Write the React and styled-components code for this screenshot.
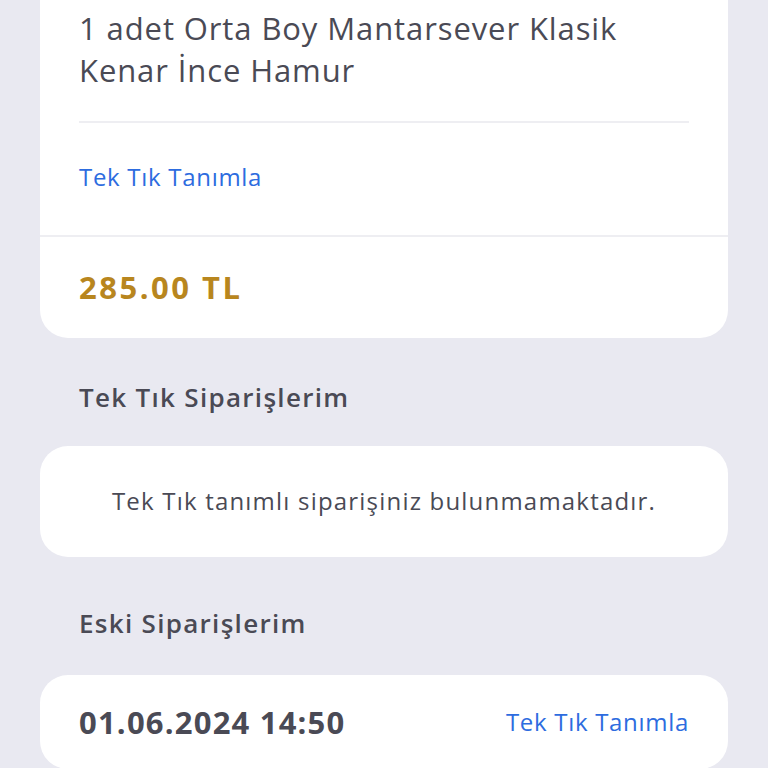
import styled, { createGlobalStyle } from 'styled-components';

const Global = createGlobalStyle`
  html, body {
    margin: 0;
    padding: 0;
    background: #e9e9f1;
    font-family: "Open Sans", "Noto Sans", sans-serif;
    color: #4a4a55;
  }
`;

const Page = styled.div`
  width: 768px;
  height: 768px;
  overflow: hidden;
  padding: 0 40px;
  box-sizing: border-box;
`;

const Card = styled.div`
  background: #fff;
  border-radius: ${(p) => (p.$open ? '0 0 28px 28px' : '28px')};
  overflow: hidden;
`;

const Block = styled.div`
  padding: ${(p) => p.$pad || '0 39px'};
`;

const ItemText = styled.p`
  margin: 0;
  font-size: 31px;
  line-height: 42px;
  letter-spacing: 0.9px;
`;

const Rule = styled.div`
  height: 2px;
  background: #eeeef2;
  margin: ${(p) => p.$margin || '0'};
`;

const Link = styled.a`
  font-size: 24px;
  color: #2d6cdf;
  text-decoration: none;
  line-height: 30px;
  letter-spacing: 0.7px;
`;

const Price = styled.div`
  font-size: 31px;
  font-weight: 700;
  color: #b8861e;
  line-height: 36px;
  letter-spacing: 2.5px;
`;

const SectionTitle = styled.h2`
  margin: 0;
  padding: ${(p) => p.$pad};
  font-size: 26px;
  font-weight: 600;
  line-height: 34px;
  letter-spacing: 1.3px;
  color: #4a4a55;
`;

const Empty = styled.div`
  font-size: 24px;
  text-align: center;
  padding: 40px 20px 41px;
  line-height: 30px;
  letter-spacing: 1.2px;
`;

const OrderRow = styled.div`
  display: flex;
  justify-content: space-between;
  align-items: center;
  padding: 27px 39px;
`;

const OrderDate = styled.div`
  font-size: 31px;
  font-weight: 700;
  line-height: 40px;
  letter-spacing: 1.2px;
`;

export default function App() {
  return (
    <Page>
      <Global />
      <Card $open>
        <Block $pad="7px 39px 0">
          <ItemText>
            1 adet Orta Boy Mantarsever Klasik
            <br />
            Kenar İnce Hamur
          </ItemText>
        </Block>
        <Rule $margin="30px 39px 0" />
        <Block $pad="39px 39px 43px">
          <Link href="#">Tek Tık Tanımla</Link>
        </Block>
        <Rule />
        <Block $pad="32px 39px 33px">
          <Price>285.00 TL</Price>
        </Block>
      </Card>
      <SectionTitle $pad="42px 39px 32px">Tek Tık Siparişlerim</SectionTitle>
      <Card>
        <Empty>Tek Tık tanımlı siparişiniz bulunmamaktadır.</Empty>
      </Card>
      <SectionTitle $pad="49px 39px 35px">Eski Siparişlerim</SectionTitle>
      <Card>
        <OrderRow>
          <OrderDate>01.06.2024 14:50</OrderDate>
          <Link href="#">Tek Tık Tanımla</Link>
        </OrderRow>
      </Card>
    </Page>
  );
}
